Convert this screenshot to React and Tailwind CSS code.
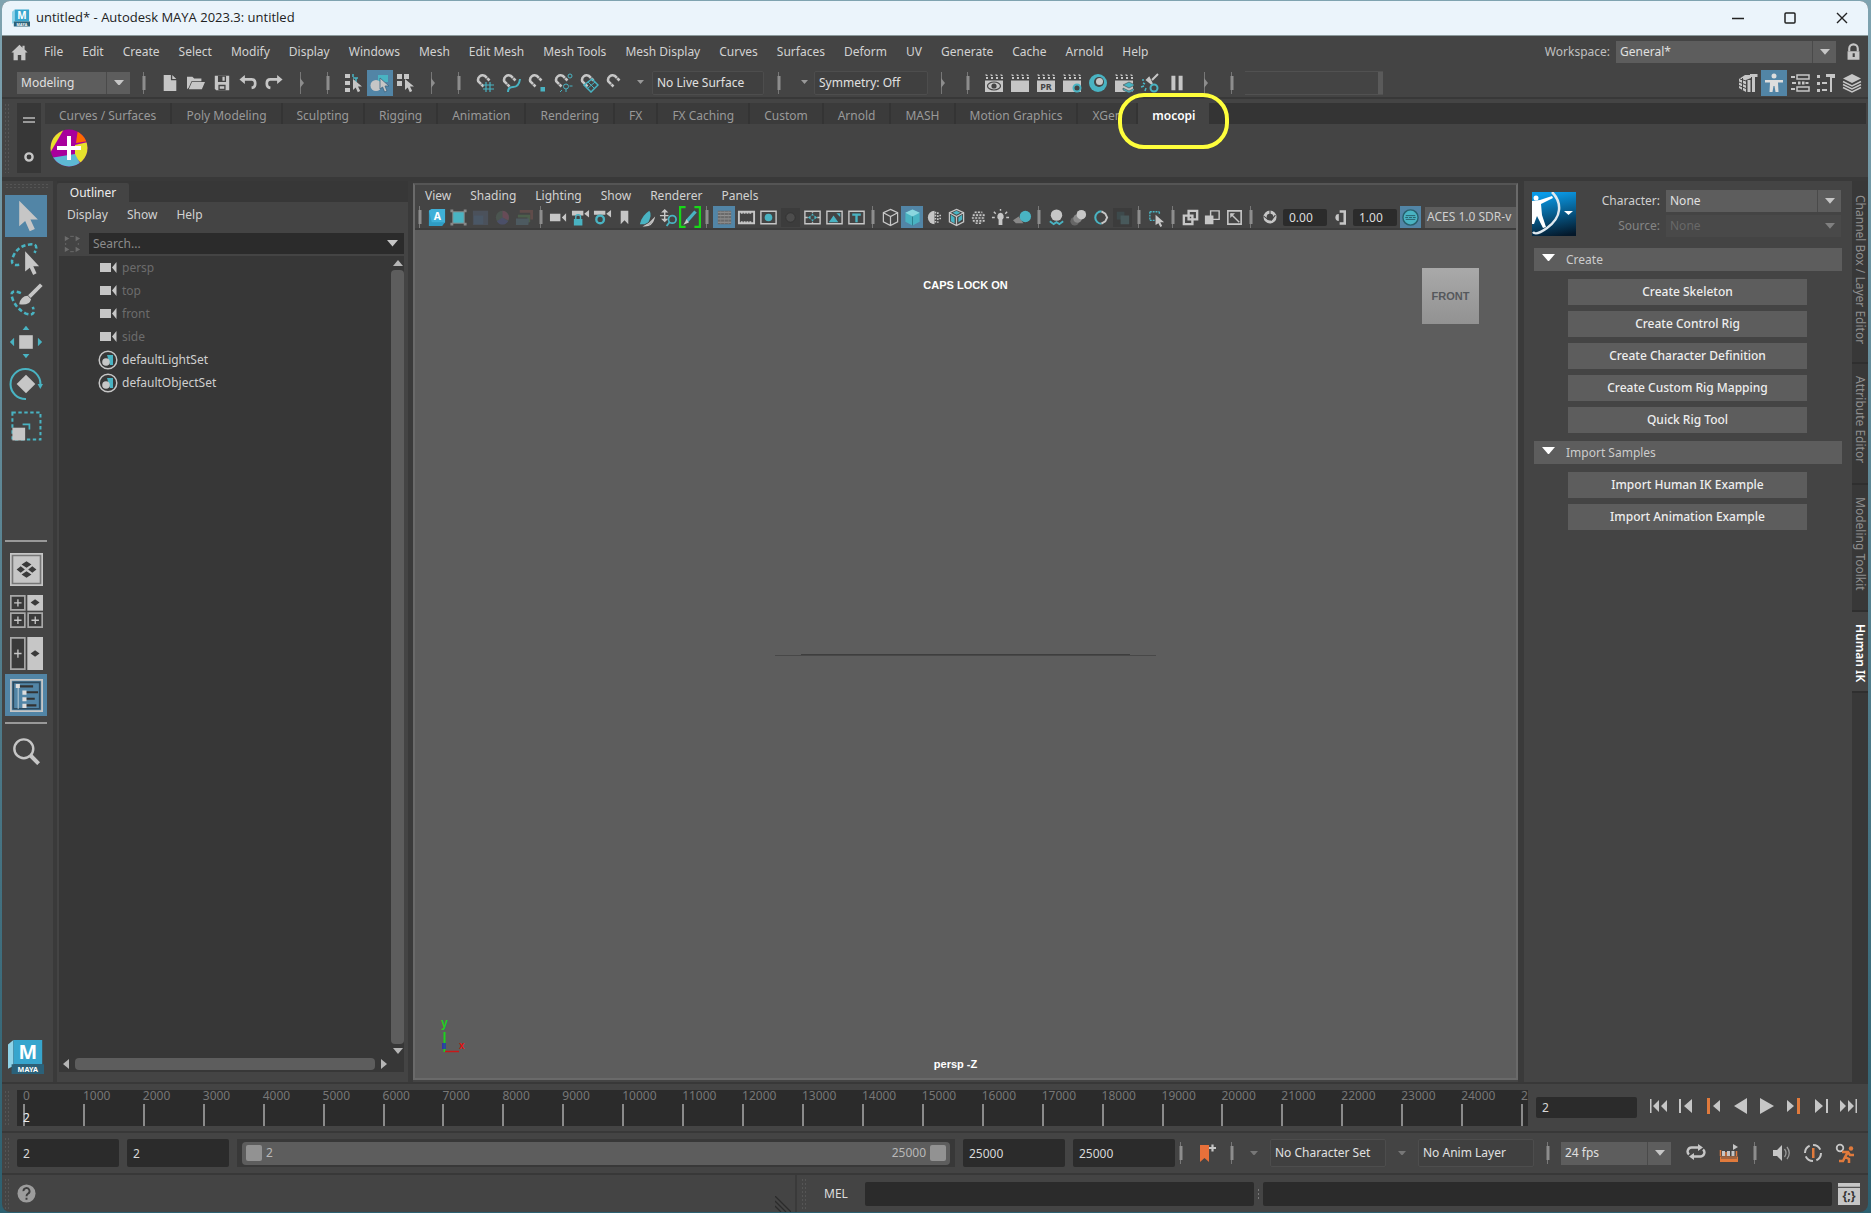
import React, { useState } from 'react';

const G = '#c6c6c6';
const T = '#49b3c2';
const O = '#e07a3c';

const magnet = (
  <>
    <path d="M8.500 13.500 3.300 8.300A4.600 4.600 0 0 1 9.800 2.800L14.500 7.500" fill="none" stroke={G} strokeWidth="2.600" />
    <path d="M5 12.500 7.800 9.700M10.500 6.800 13.300 4" stroke="#444" strokeWidth="0.800" />
  </>
);
const clapper = (
  <>
    <path d="M1 1.500h2l1 1.500H2zM6 1.500h2l1 1.500H7zM11 1.500h2l1 1.500h-2zM16 1.500h2l1 1.500h-2zM2 4h2v2H2zM7 4h2v2H7zM12 4h2v2h-2zM17 4h2v2h-2z" fill={G} />
    <path d="M1 7.500h18v11.500H1z" fill={G} />
  </>
);
const cursor = <path d="M9 6l9 7.500h-4l2.200 4.500-2.400 1.200-2.100-4.700L9 17z" fill={G} />;
const camera = <path d="M1 6h11v8H1zM13.500 10 18 5.500v9z" fill={G} />;
const cube = <path d="M10 1.500 17.500 5v9.500L10 18.500 2.500 14.500V5zM2.500 5 10 9l7.500-4M10 9v9.500" fill="none" stroke={G} strokeWidth="1.300" />;

const ICONS = {
  home: <path d="M10 1 0.500 10H3v9h5v-6h4v6h5v-9h2.500L16 6.500V2h-2.500v2.300z" fill={G} />,
  newFile: <path d="M3 1h8v6h6v12H3zM12.500 1 17 5.500h-4.500z" fill={G} />,
  open: <path d="M0 3h6l2 2h8v3H5l-3 7-2 2zM5.500 9H20l-3.500 8H2z" fill={G} />,
  save: (
    <>
      <path d="M2 2h16v16H3.500L2 16.500z" fill={G} />
      <path d="M5.500 2h9v7h-9zM6 12h8v6H6z" fill="#444" />
      <path d="M10.500 3h2.500v4.500h-2.500zM7.500 13.500h5v3h-5z" fill={G} />
    </>
  ),
  undo: (
    <>
      <path d="M5 6h9q4 0 4 4.500T14 15.500" fill="none" stroke={G} strokeWidth="3" />
      <path d="M6.500 1v10L0.500 6z" fill={G} />
    </>
  ),
  redo: (
    <>
      <path d="M15 6H6q-4 0-4 4.500T6 15.500" fill="none" stroke={G} strokeWidth="3" />
      <path d="M13.500 1v10l6-5z" fill={G} />
    </>
  ),
  selHier: (
    <>
      <path d="M1 1h5v4H1zM1 8h5v4H1zM1 15h5v4H1z" fill={G} />
      <path d="M9 1v3M9 5h5M12 5v4" stroke={T} strokeWidth="1.500" fill="none" />
      {cursor}
    </>
  ),
  selObj: (
    <>
      <path d="M8 2h10v7H8z" fill={T} />
      <circle cx="6" cy="12.500" r="5.500" fill={G} />
      <path d="M10 5l9 8h-4l2 5-2.400 1-2-5-2.600 2z" fill={G} stroke="#3d6580" strokeWidth="0.800" />
    </>
  ),
  selComp: (
    <>
      <path d="M1 1h5v5H1zM8 1h5v5H8zM1 8h5v5H1z" fill={G} />
      {cursor}
    </>
  ),
  magGrid: (
    <>
      {magnet}
      <path d="M8 12h11M8 16h11M11 9v10M15 9v10" stroke={T} strokeWidth="1.200" />
    </>
  ),
  magCurve: (
    <>
      {magnet}
      <path d="M7 19q0-5 5-5 6 0 7-8" fill="none" stroke={T} strokeWidth="2" />
    </>
  ),
  magPoint: (
    <>
      {magnet}
      <path d="M13.500 14h4.500v4.500h-4.500z" fill={T} />
    </>
  ),
  magProj: (
    <>
      {magnet}
      <circle cx="17" cy="3" r="2" fill="none" stroke={T} />
      <circle cx="13" cy="13.500" r="2.500" fill="none" stroke={T} />
      <path d="M13 16v3M16.500 13h3M9 17l-2 2" stroke={T} />
    </>
  ),
  magPlane: (
    <>
      {magnet}
      <path d="M5 12 13 6l6 6-7 7z" fill="none" stroke={T} strokeWidth="1.500" />
      <path d="M9 9l6 6M8.500 15.500 16 9" stroke={T} />
    </>
  ),
  mag: magnet,
  renderView: (
    <>
      {clapper}
      <ellipse cx="10" cy="13" rx="6.500" ry="4" fill="none" stroke="#444" strokeWidth="1.200" />
      <circle cx="10" cy="13" r="2.600" fill="#444" />
    </>
  ),
  render: clapper,
  ipr: (
    <>
      {clapper}
      <text x="10" y="17" fontSize="9" fontWeight="700" textAnchor="middle" fill="#444">PR</text>
    </>
  ),
  renderSet: (
    <>
      {clapper}
      <circle cx="15" cy="15" r="3.500" fill="#444" stroke={T} strokeWidth="2" />
    </>
  ),
  hyper: (
    <>
      <circle cx="10" cy="10" r="9" fill={T} />
      <circle cx="11" cy="9" r="5" fill="#444" />
      <circle cx="11.500" cy="8.500" r="3.500" fill={G} />
    </>
  ),
  renderLayer: (
    <>
      {clapper}
      <path d="M9 12l6-3 6 3-6 3zM9 15l6 3 6-3v2l-6 3-6-3z" fill={T} stroke="#444" strokeWidth="0.600" />
    </>
  ),
  lightEd: (
    <>
      <path d="M18 1 12 7M7 7l5 4-3-6z" stroke={G} strokeWidth="2" fill={G} />
      <path d="M2 7h2M1 14l3-1M5 18l1-3M3 10l2 1" stroke={T} strokeWidth="1.500" />
      <circle cx="14" cy="15" r="3.500" fill="none" stroke={T} strokeWidth="2" />
    </>
  ),
  pause: <path d="M3 1h5v18H3zM12 1h5v18h-5z" fill={G} />,
  modelKit: (
    <>
      <path d="M1 6 7 2h6v3L8 7v12l-7-4z" fill={G} />
      <path d="M1 9l7 3M1 12.500l7 3M4.500 5v12M2 6l6 2" stroke="#444" />
      <path d="M9.500 7h3v12h-3zM12 1h7.500v3H17v15h-3V4h-2z" fill={G} />
    </>
  ),
  human: (
    <>
      <circle cx="10" cy="3" r="2.500" fill="#ddd" />
      <path d="M1 7h18v2.500h-5L14.500 19h-3l-1-6h-1l-1 6h-3L6 9.500H1z" fill="#ddd" />
    </>
  ),
  attrs: (
    <>
      <path d="M7 2h12v4H7zM7 14h12v4H7z" fill="none" stroke={G} strokeWidth="1.500" />
      <path d="M1 4h4M2 10h4M1 16h4M15.500 10h3" stroke={G} strokeWidth="2" />
      <path d="M8 8.500h2.500v3H8zM12 8.500h2.500v3H12z" fill={G} />
    </>
  ),
  toolSet: (
    <>
      <path d="M1 2h3v3H1zM1 9h3v3H1zM1 16h3v3H1zM10 1h9v4h-3v14h-2V4h-4z" fill={G} />
      <path d="M6 10h5M6 17h5" stroke={G} strokeWidth="2" />
    </>
  ),
  layers: (
    <>
      <path d="M10 1l9 4.500-9 4.500-9-4.500z" fill={G} />
      <path d="M1 8.500 10 13l9-4.500M1 11.500 10 16l9-4.500M1 14.500 10 19l9-4.500" fill="none" stroke={G} strokeWidth="1.500" />
    </>
  ),
  lock: (
    <>
      <path d="M5 9V6a5 5 0 0 1 10 0v3" fill="none" stroke={G} strokeWidth="2.500" />
      <path d="M3 9h14v10H3z" fill={G} />
      <path d="M9 11.500h2.500V16H9z" fill="#444" />
    </>
  ),
  // panel toolbar
  aces: (
    <>
      <path d="M2 3 5 1h14v14l-3 4H2z" fill="#2f9cc4" />
      <path d="M2 3 5 1h14v14H5z" fill="#3fb0d8" />
      <text x="11" y="13" fontSize="11" fontWeight="700" textAnchor="middle" fill="#fff">A</text>
    </>
  ),
  frameAll: (
    <>
      <path d="M4 4h12v12H4z" fill={T} stroke="#888" />
      <path d="M1.500 1.500h3v3h-3zM15.500 1.500h3v3h-3zM1.500 15.500h3v3h-3zM15.500 15.500h3v3h-3z" fill="#888" />
    </>
  ),
  dimSquare: (
    <>
      <path d="M2 3h16v15H2z" fill="#4b515b" />
      <path d="M3 8h10v9H3z" fill="#4a5766" />
    </>
  ),
  dimWheel: (
    <>
      <circle cx="10" cy="10" r="7" fill="#4b5550" />
      <path d="M10 10V3a7 7 0 0 1 6 10z" fill="#674b57" />
      <path d="M10 10 4 14a7 7 0 0 0 12 0z" fill="#4b4f68" />
    </>
  ),
  dimStack: (
    <>
      <path d="M5 2h14v10h-3V5H5z" fill="#604c4a" />
      <path d="M3 7h13v8h-3v-5H3z" fill="#4c5f4c" />
      <path d="M1 11h14l-1 7H1z" fill="#4d5a60" />
    </>
  ),
  cam: camera,
  camLock: (
    <>
      <path d="M1 3h12v5H1zM14 6l5-4v8z" fill={G} />
      <path d="M3 9h9v10H3z" fill="#444" />
      <path d="M5 12V9.500a2.500 2.500 0 0 1 5 0V12" fill="none" stroke={T} strokeWidth="1.500" />
      <path d="M3 11.500h9v7H3z" fill={T} />
    </>
  ),
  camGear: (
    <>
      <path d="M1 3h12v4H1zM14 6l5-4v8z" fill={G} />
      <circle cx="7.500" cy="12" r="4" fill="#444" stroke={T} strokeWidth="2.500" />
    </>
  ),
  bookmark: <path d="M6 3h8v14l-4-4-4 4z" fill={G} />,
  plane: (
    <>
      <path d="M3 17Q5 8 13 3q3 4-1 12l-4 2z" fill={T} />
      <path d="M8 19q8 0 10-8l-5 5z" stroke={G} strokeWidth="1.200" fill="#888" />
    </>
  ),
  panZoom: (
    <>
      <path d="M1 8h9M6 3v10M6 2l-2 2h4zM6 14l-2-2h4z" stroke={G} strokeWidth="1.500" fill={G} />
      <circle cx="14" cy="12" r="4" fill="#444" stroke={T} strokeWidth="1.800" />
      <path d="M11 15l-3 4" stroke={T} strokeWidth="2" />
    </>
  ),
  pencil: (
    <>
      <path d="M6 1H1v18h5M14 1h5v18h-5" stroke="#18d818" strokeWidth="2" fill="none" />
      <path d="M15 5 7 14" stroke={T} strokeWidth="3" />
      <path d="M7 12 4 17l5-2z" fill={G} />
    </>
  ),
  grid: (
    <>
      <path d="M3 3h14v14H3z" fill="#6a6a6a" />
      <path d="M3 4.500h14M3 8h14M3 11.500h14M3 15h14" stroke="#999" />
      <path d="M6 3v14M10 3v14M14 3v14" stroke="#888" strokeWidth="0.600" />
    </>
  ),
  film: (
    <>
      <path d="M2 4h16v12H2z" fill="none" stroke={G} strokeWidth="2" />
      <path d="M4 5h12M4 15h12" stroke={G} strokeWidth="2" strokeDasharray="2 1" />
    </>
  ),
  gateDot: (
    <>
      <path d="M2 3.500h16v13H2z" fill="none" stroke={G} strokeWidth="1.500" />
      <circle cx="10" cy="10" r="4" fill={T} />
    </>
  ),
  gateDim: (
    <>
      <path d="M0 0h20v20H0z" fill="#3c3c3c" />
      <circle cx="10" cy="10" r="5" fill="#4d4d4d" stroke="#333" />
    </>
  ),
  gateMove: (
    <>
      <path d="M2 3.500h16v13H2zM2 10h3M15 10h3M10 3v2M10 15v2" fill="none" stroke={G} strokeWidth="1.500" />
      <path d="M5 10l3-2v4zM15 10l-3-2v4zM10 5.500 8.500 8h3zM10 14.500 8.500 12h3z" fill={T} />
    </>
  ),
  gateImg: (
    <>
      <path d="M2 3.500h16v13H2z" fill="none" stroke={G} strokeWidth="1.500" />
      <path d="M4 15l5-7 5 7zM12 5.500h4v4z" fill={T} />
    </>
  ),
  gateText: (
    <>
      <path d="M2 3.500h16v13H2z" fill="none" stroke={G} strokeWidth="1.500" />
      <path d="M5.500 7h9M10 7v8" stroke={T} strokeWidth="2.500" />
    </>
  ),
  cube,
  cubeOn: (
    <>
      <path d="M10 1.500 17.500 5v9.500L10 18.500 2.500 14.500V5z" fill={T} />
      <path d="M2.500 5 10 9l7.500-4L10 1.500z" fill="#8bd6df" />
      <path d="M10 9v9.500" stroke="#2c7f8c" />
    </>
  ),
  shade: (
    <>
      <path d="M10 3a7 7 0 0 0 0 14z" fill={G} />
      <path d="M11 4v12M13.500 4.500v11M16 7v6" stroke={G} strokeWidth="1.700" strokeDasharray="1.700 1.500" />
    </>
  ),
  cubeTex: (
    <>
      <path d="M4 7l4 3v6l-4-2zM12 10l4-3v5l-4 3zM10 3l4 2-4 2-4-2z" fill={T} />
      {cube}
    </>
  ),
  checker: (
    <>
      <circle cx="10" cy="10" r="7" fill="#555" />
      <path d="M6 4.500h8M4 7.500h13M3 10.500h14M4 13.500h13M7 16h7" stroke={G} strokeWidth="1.700" strokeDasharray="2 1.500" />
    </>
  ),
  light: (
    <>
      <path d="M10 5a4 4 0 0 1 2 7v6H8v-6a4 4 0 0 1 2-7z" fill={G} />
      <path d="M10 1v2M3 4l2 2M17 4l-2 2M1 10h3M16 10h3" stroke={G} strokeWidth="1.500" />
    </>
  ),
  shadow: (
    <>
      <path d="M0 13 6 9l5 7H3z" fill="#888" />
      <circle cx="13" cy="9" r="6" fill={T} />
    </>
  ),
  ao: (
    <>
      <circle cx="10" cy="7.500" r="6" fill={G} />
      <path d="M3 14l4 3 3-2 3 2 4-3" fill="none" stroke={T} strokeWidth="2" />
    </>
  ),
  motion: (
    <>
      <circle cx="6" cy="14" r="4.500" fill="#666" />
      <circle cx="9" cy="11" r="4.500" fill="#8a8a8a" />
      <circle cx="13" cy="7" r="5" fill={G} />
    </>
  ),
  aa: (
    <>
      <path d="M11 3.500a6.500 6.500 0 0 0 0 13" fill="none" stroke={T} strokeWidth="2.200" />
      <path d="M11 3.500l4 2.500 2 4-2 4-4 2.500" fill="none" stroke={G} strokeWidth="2" />
    </>
  ),
  dof: (
    <>
      <path d="M0 0h20v20H0z" fill="#3c3c3c" />
      <path d="M4 4h8v8H4z" fill="#3d4a4c" />
      <path d="M8 8h9v9H8z" fill="#48595b" />
    </>
  ),
  isolate: (
    <>
      <path d="M3 4h10M3 4v9M3 13h5M13 4v3" stroke={T} strokeWidth="1.500" strokeDasharray="2 1" fill="none" />
      <path d="M9 7l9 8h-4l2 4-2 1-2-4-3 2z" fill={G} />
    </>
  ),
  xrayA: (
    <>
      <path d="M8 3h9v9H8z" fill="none" stroke={G} strokeWidth="2.500" />
      <path d="M3 8h9v9H3z" fill="none" stroke={G} strokeWidth="2.500" />
    </>
  ),
  xrayB: (
    <>
      <path d="M8 3h9v9H8z" fill="none" stroke={G} strokeWidth="1.500" />
      <path d="M2 8h9v9H2z" fill={G} />
    </>
  ),
  xrayC: (
    <>
      <path d="M3 3h14v14H3z" fill="none" stroke={G} strokeWidth="1.700" />
      <path d="M6 6l9 9" stroke={G} strokeWidth="1.500" />
      <path d="M5.500 5.500h5l-5 5z" fill={G} />
    </>
  ),
  exposure: (
    <>
      <circle cx="10" cy="10" r="5.500" fill="none" stroke={G} strokeWidth="3.500" />
      <path d="M10 2v5M3 9l5 4M16 8l-5 6" stroke="#444" strokeWidth="1.200" />
    </>
  ),
  gamma: (
    <>
      <path d="M9 3h6v14H9" fill="none" stroke={G} strokeWidth="3" />
      <path d="M8 6a4 4 0 0 0 0 8z" fill={G} />
    </>
  ),
  cms: (
    <>
      <circle cx="10" cy="10" r="8" fill={T} stroke="#28606c" strokeWidth="1.500" />
      <path d="M4.500 10h3M8.500 10h3M12.500 10h3M5 12h10M5 8h10" stroke="#28606c" />
    </>
  ),
  // playback
  toStart: <path d="M1 3h1.500v14H1zM10 4v12l-6-6zM18 4v12l-6-6z" fill={G} />,
  stepBack: <path d="M3 3h2v14H3zM16 3v14l-8-7z" fill={G} />,
  keyBack: (
    <>
      <path d="M4 2h3v16H4z" fill={O} />
      <path d="M17 4v12l-7-6z" fill={G} />
    </>
  ),
  playBack: <path d="M17 2v16L4 10z" fill={G} />,
  play: <path d="M3 2v16l14-8z" fill={G} />,
  keyFwd: (
    <>
      <path d="M13 2h3v16h-3z" fill={O} />
      <path d="M3 4v12l7-6z" fill={G} />
    </>
  ),
  stepFwd: <path d="M15 3h2v14h-2zM4 3v14l8-7z" fill={G} />,
  toEnd: <path d="M17.500 3H19v14h-1.500zM2 4v12l6-6zM10 4v12l6-6z" fill={G} />,
  bookAdd: (
    <>
      <path d="M3 2h9v17l-4.500-4L3 19z" fill="#e8703a" />
      <path d="M12 5h7M15.500 1.500v7" stroke={G} strokeWidth="2.200" />
    </>
  ),
  loop: (
    <>
      <path d="M14 4.500H6a4 4 0 0 0-3 7M6 13.500h8a4 4 0 0 0 3-7" fill="none" stroke={G} strokeWidth="2.400" />
      <path d="M12 1l5 3.500L12 8zM8 10l-5 3.500L8 17z" fill={G} />
    </>
  ),
  cached: (
    <>
      <path d="M1 13.500h18V19H1z" fill={O} />
      <path d="M2 15h16" stroke="#444" strokeWidth="0.800" />
      <path d="M3 8h3v5H3zM8 8h3v5H8zM12.500 8h3v5h-3z" fill={G} />
      <path d="M14 1l5 3-5 3z" fill={G} />
      <path d="M1.500 7v6M7 9v4M17.500 8v5" stroke={O} strokeWidth="1.500" />
    </>
  ),
  speaker: (
    <>
      <path d="M2 7h4l5-5v16l-5-5H2z" fill={G} />
      <path d="M13.500 6q3 4 0 8M16 4q4.500 6 0 12" fill="none" stroke="#999" strokeWidth="1.300" />
    </>
  ),
  autoKey: (
    <>
      <circle cx="10" cy="10" r="8" fill="none" stroke={G} strokeWidth="2" strokeDasharray="9 3.500" />
      <path d="M9 5h2.500v10H9z" fill={O} />
    </>
  ),
  runner: (
    <>
      <circle cx="5" cy="5" r="3.300" fill="none" stroke={G} strokeWidth="1.800" />
      <circle cx="16" cy="5.500" r="2.200" fill={O} />
      <path d="M7 9h6l2 3h4M13 9l-3 5 4 2v4M10 14l-2 4H4" fill="none" stroke={O} strokeWidth="2.500" />
    </>
  ),
  // tool box
  arrowTool: <path d="M6 1v15l3.500-3 2.700 6 3-1.300-2.600-5.700H17z" fill={G} />,
  lasso: (
    <>
      <path d="M6 14Q0 15 2.500 9T12 2q6-1 3 5" fill="none" stroke={T} strokeWidth="1.500" strokeDasharray="2.500 1.500" />
      <path d="M9.500 6v12l2.700-2.300 2 4.300 2-1-1.900-4.200h3.400z" fill={G} />
    </>
  ),
  paintSel: (
    <>
      <path d="M7 6Q0 3 2 9t8 9q6 2 4-4" fill="none" stroke={T} strokeWidth="1.500" strokeDasharray="2.500 1.500" />
      <path d="M19 1 12 8" stroke={G} strokeWidth="2.200" />
      <path d="M6 12.500q1-5 5-5l2 2q-1 4-7 3z" fill={G} />
    </>
  ),
  move: (
    <>
      <path d="M6 6h8v8H6z" fill={G} />
      <path d="M10 0.500 12 3H8zM10 19.500 12 17H8zM0.500 10 3 7.500v5zM19.500 10 17 7.500v5z" fill={T} />
    </>
  ),
  rotate: (
    <>
      <path d="M10 4.500 15.500 10 10 15.500 4.500 10z" fill={G} />
      <path d="M18.500 10A8.800 8.800 0 1 0 10 18.800" fill="none" stroke={T} strokeWidth="1.200" />
      <path d="M16.800 10h3.200l-1.600 3z" fill={T} />
    </>
  ),
  scale: (
    <>
      <path d="M2 2h16.500v16H2z" fill="none" stroke={T} strokeWidth="1.200" strokeDasharray="2 1.500" />
      <path d="M2 11h7.500v7.500H2z" fill={G} />
      <path d="M8 9h4v3" stroke={T} fill="none" />
    </>
  ),
  single: (
    <>
      <path d="M0 0h20v20H0z" fill={G} />
      <path d="M1.500 1.500h17v17h-17z" fill="none" stroke="#777" />
      <path d="M10 5l3 2-3 2-3-2zM10 11l3 2-3 2-3-2zM6.500 8l2.500 2-2.500 2L4 10zM13.500 8l2.500 2-2.500 2-2.500-2z" fill="#3a3a3a" />
    </>
  ),
  quad: (
    <>
      <path d="M0.500 0.500h8.500v8.500H0.500zM0.500 11h8.500v8.500H0.500zM11 11h8.500v8.500H11z" fill="#3a3a3a" stroke="#a8a8a8" />
      <path d="M10.500 0H20v9.500h-9.500z" fill={G} />
      <path d="M2.500 4.800h4.500M4.800 2.500v4.500M2.500 15.300h4.500M4.800 13v4.500M13 15.300h4.500M15.300 13v4.500" stroke={G} strokeWidth="0.800" />
      <path d="M12.500 4.500l2.700-2 2.700 2-2.700 2z" fill="#3a3a3a" />
    </>
  ),
  duo: (
    <>
      <path d="M0.500 0.500h8.500v19H0.500z" fill="#3a3a3a" stroke="#a8a8a8" />
      <path d="M10.500 0H20v20h-9.500z" fill={G} />
      <path d="M2.500 10h4.500M4.800 7.500v5" stroke={G} strokeWidth="0.800" />
      <path d="M12.500 10l2.700-2 2.700 2-2.700 2z" fill="#3a3a3a" />
    </>
  ),
  outliner: (
    <>
      <path d="M0.500 0.500h19v19h-19z" fill="none" stroke={G} strokeWidth="1.200" />
      <path d="M2 2h16v16H2z" fill="none" stroke="#2d4a5e" />
      <path d="M5 4v14" stroke="#9fbccc" strokeWidth="0.800" />
      <path d="M5 4.500h9M9 8h8M9 12h6M9 16h7" stroke="#333" strokeWidth="1.300" />
      <path d="M3.500 3h2.500v2.500H3.500zM7.500 7H10v2.500H7.500zM7.500 11H10v2.500H7.500zM7.500 15H10v2.500H7.500z" fill="#ddd" />
    </>
  ),
  search: (
    <>
      <circle cx="8" cy="8" r="7" fill="none" stroke={G} strokeWidth="1.800" />
      <path d="M13 13 19 19" stroke={G} strokeWidth="3" />
    </>
  ),
  mayaLogo: (
    <>
      <path d="M0 3 3 0.500V15l-3 1.500z" fill="#8fd3e8" />
      <path d="M3 0.500h16V14H3z" fill="#37a5cd" />
      <path d="M2 14h18v5.500H2z" fill="#2b6179" />
      <text x="11" y="11" fontSize="11" fontWeight="700" textAnchor="middle" fill="#fff">M</text>
      <text x="11" y="18.500" fontSize="4" fontWeight="700" textAnchor="middle" fill="#fff">MAYA</text>
    </>
  ),
  setIcon: (
    <>
      <circle cx="10" cy="10" r="8.800" fill="none" stroke={G} strokeWidth="1.500" />
      <path d="M9 5h6v10h-3z" fill={T} />
      <circle cx="8" cy="12" r="3.800" fill={G} />
    </>
  ),
  filter: (
    <>
      <path d="M2 1v6l5-3zM14 1v6l5-3zM2 13v6l5-3zM14 13v6l5-3z" fill="#6c6c6c" />
      <path d="M8 1.500h4M8 18.500h4M3 9v2M17 9v2" stroke="#6c6c6c" />
    </>
  ),
  help: (
    <>
      <circle cx="10" cy="10" r="9.500" fill="#9c9c9c" />
      <path d="M6.800 7.500a3.200 3.200 0 1 1 4.800 2.700Q10 11 10 13" fill="none" stroke="#3d3d3d" strokeWidth="2" />
      <path d="M9 14.500h2v2H9z" fill="#3d3d3d" />
    </>
  ),
  script: (
    <>
      <path d="M0 0h20v20H0z" fill={G} />
      <path d="M0 4h20" stroke="#555" />
      <text x="10" y="15.500" fontSize="11" fontWeight="700" textAnchor="middle" fill="#333">{'{;}'}</text>
    </>
  ),
  gearSmall: <circle cx="10" cy="10" r="6" fill="none" stroke={G} strokeWidth="4" />,
};

function Icon({ name, className = 'size-5' }) {
  return (
    <svg viewBox="0 0 20 20" className={`shrink-0 ${className}`} aria-hidden="true">
      {ICONS[name]}
    </svg>
  );
}

function IconButton({ name, cell = 'h-[26px] w-[26px]', icon = 'size-5', active = false }) {
  return (
    <button type="button" aria-label={name} className={`flex shrink-0 items-center justify-center ${cell} ${active ? 'bg-[#5285a6]' : ''}`}>
      <Icon name={name} className={icon} />
    </button>
  );
}

function Sep({ arrow = false, className = 'w-[27px]' }) {
  return (
    <div className={`flex shrink-0 justify-center ${className}`}>
      <svg viewBox="0 0 6 26" className="h-[26px] w-1.5" aria-hidden="true">
        <path d="M2.500 2v22" stroke="#777" />
        <path d={arrow ? 'M2 8l4 5-4 5z' : 'M1.500 6h3v14h-3z'} fill="#8d8d8d" />
      </svg>
    </div>
  );
}

function Caret({ className = 'w-[11px] text-[#c6c6c6]' }) {
  return (
    <svg viewBox="0 0 12 7" className={`shrink-0 ${className}`} aria-hidden="true">
      <path d="M0 0h12L6 7z" fill="currentColor" />
    </svg>
  );
}

function Dropdown({ id, label, value, className, disabled = false }) {
  return (
    <div className={`relative ${disabled ? 'bg-[#494949] text-[#686868]' : 'bg-[#5d5d5d] text-[#e0e0e0]'} ${className}`}>
      <select id={id} aria-label={label} disabled={disabled} className="h-full w-full appearance-none bg-transparent pl-1 outline-none">
        <option>{value}</option>
      </select>
      <span className={`pointer-events-none absolute inset-y-0 right-0 flex w-6 items-center justify-center border-l ${disabled ? 'border-[#494949]' : 'border-[#4a4a4a]'}`}>
        <Caret className={disabled ? 'w-[10px] text-[#808080]' : 'w-[10px] text-[#c6c6c6]'} />
      </span>
    </div>
  );
}

function Grip({ className = 'my-1' }) {
  return <div className={`w-[7px] shrink-0 bg-[radial-gradient(#555_1px,transparent_1px)] bg-[size:3px_4px] ${className}`} />;
}

function MenuItems({ items, className }) {
  return (
    <nav className={`flex items-center ${className}`}>
      {items.map((m) => (
        <button type="button" key={m} className="whitespace-nowrap">{m}</button>
      ))}
    </nav>
  );
}

const MENUS = ['File', 'Edit', 'Create', 'Select', 'Modify', 'Display', 'Windows', 'Mesh', 'Edit Mesh', 'Mesh Tools', 'Mesh Display', 'Curves', 'Surfaces', 'Deform', 'UV', 'Generate', 'Cache', 'Arnold', 'Help'];
const SHELVES = ['Curves / Surfaces', 'Poly Modeling', 'Sculpting', 'Rigging', 'Animation', 'Rendering', 'FX', 'FX Caching', 'Custom', 'Arnold', 'MASH', 'Motion Graphics', 'XGen', 'mocopi'];

function TitleBar() {
  return (
    <header className="flex h-[35px] shrink-0 items-center border-b border-[#8c9a9c] bg-[#ebf4fb] pl-2.5 font-['Open_Sans',sans-serif] text-[13px] text-[#222]">
      <Icon name="mayaLogo" className="size-[18px]" />
      <h1 className="ml-1.5 grow">untitled* - Autodesk MAYA 2023.3: untitled</h1>
      <button type="button" aria-label="Minimize" className="flex w-[52px] justify-center">
        <svg viewBox="0 0 12 12" className="size-3"><path d="M0 6.500h12" stroke="#222" strokeWidth="1.500" /></svg>
      </button>
      <button type="button" aria-label="Maximize" className="flex w-[52px] justify-center">
        <svg viewBox="0 0 12 12" className="size-3"><rect x="1" y="1" width="10" height="10" rx="1" fill="none" stroke="#222" strokeWidth="1.500" /></svg>
      </button>
      <button type="button" aria-label="Close" className="flex w-[52px] justify-center">
        <svg viewBox="0 0 12 12" className="size-3"><path d="M1 1l10 10M11 1 1 11" stroke="#222" strokeWidth="1.400" /></svg>
      </button>
    </header>
  );
}

function MenuBar() {
  return (
    <div className="flex h-8 shrink-0 items-center pr-1.5 pl-[9px]">
      <Icon name="home" className="size-[17px]" />
      <MenuItems items={MENUS} className="ml-4 grow gap-[19px] text-[#d2d2d2]" />
      <label htmlFor="workspace" className="mr-1.5 text-[#c0c0c0]">Workspace:</label>
      <Dropdown id="workspace" value="General*" className="mr-[9px] h-[22px] w-[220px]" />
      <Icon name="lock" className="h-5 w-[17px]" />
    </div>
  );
}

function StatusLine() {
  return (
    <div className="flex h-[31px] shrink-0 items-center border-b-2 border-[#383838] pr-[3px] pl-0.5">
      <Grip />
      <Dropdown label="Menu set" value="Modeling" className="ml-1.5 h-[22px] w-[113px]" />
      <Sep />
      {['newFile', 'open', 'save', 'undo', 'redo'].map((n) => <IconButton key={n} name={n} icon="size-[18px]" />)}
      <Sep arrow />
      <Sep />
      {['selHier', 'selObj', 'selComp'].map((n) => <IconButton key={n} name={n} active={n === 'selObj'} />)}
      <Sep arrow className="w-[26px]" />
      <Sep />
      {['magGrid', 'magCurve', 'magPoint', 'magProj', 'magPlane', 'mag'].map((n) => <IconButton key={n} name={n} />)}
      <button type="button" aria-label="Live surface menu" className="flex w-6 justify-center"><Caret className="w-[7px] text-[#999]" /></button>
      <button type="button" className="h-6 w-28 rounded-xs border border-[#4d4d4d] bg-[#404040] px-1 text-left whitespace-nowrap text-[#e0e0e0]">No Live Surface</button>
      <Sep className="w-[30px]" />
      <button type="button" aria-label="Symmetry menu" className="flex w-5 justify-center"><Caret className="w-[7px] text-[#999]" /></button>
      <button type="button" className="h-6 w-[114px] rounded-xs border border-[#4d4d4d] bg-[#404040] px-1 text-left text-[#e0e0e0]">Symmetry: Off</button>
      <Sep arrow />
      <Sep className="w-[26px]" />
      {['renderView', 'render', 'ipr', 'renderSet', 'hyper', 'renderLayer', 'lightEd'].map((n) => <IconButton key={n} name={n} />)}
      <IconButton name="pause" cell="h-[26px] w-7" icon="size-4" />
      <Sep arrow />
      <Sep />
      <div className="flex h-6 w-[138px] border-y border-[#515151]">
        <input aria-label="Quick select" className="min-w-0 grow bg-transparent outline-none" />
        <span className="w-1.5 bg-[#5a5a5a]" />
      </div>
      <div className="ml-auto flex">
        {['modelKit', 'human', 'attrs', 'toolSet', 'layers'].map((n) => <IconButton key={n} name={n} active={n === 'human'} />)}
      </div>
    </div>
  );
}

function Shelf() {
  const [tab, setTab] = useState('mocopi');
  return (
    <div className="flex h-[82px] shrink-0 border-b-4 border-[#393939] pt-1 pr-0.5 pb-1 pl-0.5">
      <Grip className="my-0" />
      <div className="ml-1.5 flex w-6 flex-col items-center bg-[#373737] pt-[14px]">
        <button type="button" aria-label="Shelf menu" className="h-[6px] w-3 border-y-2 border-[#999]" />
        <button type="button" aria-label="Shelf options" className="mt-7"><Icon name="gearSmall" className="size-3" /></button>
      </div>
      <div className="ml-1 grow">
        <div className="flex h-[21px] gap-0.5 bg-[#343434]">
          {SHELVES.map((s) => (
            <div key={s} className="relative flex">
              <button
                type="button"
                onClick={() => setTab(s)}
                className={`px-[14px] pt-1 leading-4 whitespace-nowrap ${tab === s ? 'bg-[#444] font-semibold text-white' : 'bg-[#3b3b3b] text-[#999]'}`}
              >
                {s}
              </button>
              {s === 'mocopi' && (
                <span className="pointer-events-none absolute -inset-x-5 -top-2.5 h-14 rounded-[26px] border-4 border-[#ffff3c]" />
              )}
            </div>
          ))}
        </div>
        <button type="button" aria-label="mocopi receiver" className="mt-[5px] ml-[5px] block">
          <svg viewBox="0 0 38 38" className="size-[38px]">
            <defs><clipPath id="disc"><circle cx="19" cy="19" r="18.500" /></clipPath></defs>
            <g clipPath="url(#disc)">
              <path d="M0 0h38v38H0z" fill="#a8009c" />
              <path d="M0 0h14L0 24z" fill="#e6e22c" />
              <path d="M28 0 26 14l12-2V0z" fill="#ff6a00" />
              <path d="M38 13 25 16v12l8 8 5-6z" fill="#e6e22c" />
              <path d="M0 29 25 25l7 13H0z" fill="#5db9d4" />
            </g>
            <path d="M19 7v24M7 19h24" stroke="#fff" strokeWidth="4" />
          </svg>
        </button>
      </div>
    </div>
  );
}

function ToolBox() {
  const tools = ['arrowTool', 'lasso', 'paintSel', 'move', 'rotate', 'scale'];
  return (
    <aside className="flex w-[51px] shrink-0 flex-col items-start pt-0.5 pl-[3px]">
      <div className="h-[7px] w-[44px] bg-[radial-gradient(#555_1px,transparent_1px)] bg-[size:4px_3px]" />
      <div className="mt-[5px] flex flex-col">
        {tools.map((n) => <IconButton key={n} name={n} cell="h-[42px] w-[42px]" icon="size-[34px]" active={n === 'arrowTool'} />)}
      </div>
      <div className="mt-[93px] mb-1.5 h-0.5 w-[42px] bg-[#999]" />
      {['single', 'quad', 'duo', 'outliner'].map((n) => (
        <IconButton key={n} name={n} cell="h-[42px] w-[42px]" icon="size-[33px]" active={n === 'outliner'} />
      ))}
      <div className="mt-[6px] mb-[6px] h-0.5 w-[42px] bg-[#999]" />
      <IconButton name="search" cell="h-[42px] w-[42px]" icon="size-[27px]" />
      <Icon name="mayaLogo" className="mt-auto mb-[7px] ml-[3px] size-9" />
    </aside>
  );
}

const NODES = [
  { name: 'persp', cam: true },
  { name: 'top', cam: true },
  { name: 'front', cam: true },
  { name: 'side', cam: true },
  { name: 'defaultLightSet' },
  { name: 'defaultObjectSet' },
];

function Outliner() {
  return (
    <section className="flex w-[355px] shrink-0 flex-col border-l-4 border-[#3a3a3a] pb-2.5">
      <div className="flex h-[21px] shrink-0 bg-[#373737] pt-0.5">
        <h2 className="w-[72px] rounded-t-xs bg-[#444] text-center leading-5 text-[#eee]">Outliner</h2>
      </div>
      <MenuItems items={['Display', 'Show', 'Help']} className="mt-[3px] h-5 shrink-0 gap-[19px] pl-2.5 text-[#d2d2d2]" />
      <div className="mt-2 mr-1 flex h-[21px] shrink-0 items-center pl-1.5">
        <Icon name="filter" className="size-[18px]" />
        <div className="ml-2 flex h-full grow items-center bg-[#2b2b2b] pr-1.5">
          <input aria-label="Search outliner" placeholder="Search..." className="min-w-0 grow bg-transparent pl-1 outline-none placeholder:text-[#8c8c8c]" />
          <Caret className="w-[11px] text-[#c6c6c6]" />
        </div>
      </div>
      <div className="mt-0.5 mr-1 ml-0.5 flex min-h-0 grow bg-[#373737]">
        <div className="flex min-w-0 grow flex-col">
          <ul className="grow">
            {NODES.map((n) => (
              <li key={n.name} className="flex h-[23px] items-center">
                <span className="ml-[39px] flex w-6 justify-start">
                  {n.cam ? (
                    <svg viewBox="0 0 18 12" className="ml-0.5 h-3 w-[18px]">
                      <path d="M0 1h11v9H0zM12 5.500 16.500 0v11z" fill={G} />
                    </svg>
                  ) : <Icon name="setIcon" className="size-5" />}
                </span>
                <span className={n.cam ? 'text-[#6c6c6c]' : 'text-[#cfcfcf]'}>{n.name}</span>
              </li>
            ))}
          </ul>
          <div className="flex h-4 shrink-0 items-center gap-1.5 px-1">
            <svg viewBox="0 0 6 10" className="h-[10px] w-1.5"><path d="M6 0v10L0 5z" fill="#b5b5b5" /></svg>
            <div className="h-3 grow rounded-sm bg-[#5d5d5d]" />
            <svg viewBox="0 0 6 10" className="h-[10px] w-1.5"><path d="M0 0v10l6-5z" fill="#b5b5b5" /></svg>
          </div>
        </div>
        <div className="flex w-[13px] shrink-0 flex-col items-center gap-1 pt-1 pb-[18px]">
          <svg viewBox="0 0 10 6" className="h-1.5 w-[10px]"><path d="M0 6h10L5 0z" fill="#b5b5b5" /></svg>
          <div className="w-full grow rounded-sm bg-[#5d5d5d]" />
          <svg viewBox="0 0 10 6" className="h-1.5 w-[10px]"><path d="M0 0h10L5 6z" fill="#b5b5b5" /></svg>
        </div>
      </div>
    </section>
  );
}

const PANEL_GROUPS = [
  ['aces', 'frameAll', 'dimSquare', 'dimWheel', 'dimStack'],
  ['cam', 'camLock', 'camGear', 'bookmark', 'plane', 'panZoom', 'pencil'],
  ['grid', 'film', 'gateDot', 'gateDim', 'gateMove', 'gateImg', 'gateText'],
  ['cube', 'cubeOn', 'shade', 'cubeTex', 'checker', 'light', 'shadow'],
  ['ao', 'motion', 'aa', 'dof'],
  ['isolate'],
  ['xrayA', 'xrayB', 'xrayC'],
];

function Viewport() {
  return (
    <section className="flex min-w-0 grow flex-col border-t-2 border-l-[5px] border-[#3a3a3a] pb-0.5">
      <div className="flex grow flex-col border-2 border-[#6a6a6a] border-t-[#555]">
        <MenuItems items={['View', 'Shading', 'Lighting', 'Show', 'Renderer', 'Panels']} className="h-[21px] shrink-0 gap-[19px] pl-2.5 text-[#d2d2d2]" />
        <div className="flex h-6 shrink-0 items-center border-b-2 border-[#3c3c3c]">
          {PANEL_GROUPS.map((group, i) => (
            <React.Fragment key={group[0]}>
              <Sep className={i === 0 ? 'w-2.5' : 'w-3'} />
              {group.map((n) => (
                <IconButton
                  key={n}
                  name={n}
                  cell="h-[22px] w-[22px]"
                  icon={n === 'pencil' ? 'size-[22px]' : 'size-[19px]'}
                  active={n === 'grid' || n === 'cubeOn'}
                />
              ))}
            </React.Fragment>
          ))}
          <Sep className="w-3" />
          <IconButton name="exposure" cell="h-[22px] w-[26px]" icon="size-[18px]" />
          <input aria-label="Exposure" defaultValue="0.00" className="h-[17px] w-11 rounded-xs bg-[#2b2b2b] pl-1.5 text-[#ddd] outline-none" />
          <IconButton name="gamma" cell="h-[22px] w-[26px]" icon="size-[17px]" />
          <input aria-label="Gamma" defaultValue="1.00" className="h-[17px] w-11 rounded-xs bg-[#2b2b2b] pl-1.5 text-[#ddd] outline-none" />
          <IconButton name="cms" cell="ml-[3px] h-[22px] w-[21px]" icon="size-[19px]" active />
          <button type="button" className="ml-1 h-[21px] min-w-0 grow bg-[#5d5d5d] pl-0.5 text-left whitespace-nowrap text-[#d0d0d0]">ACES 1.0 SDR-v</button>
        </div>
        <div className="relative grow bg-[#5d5d5d] font-['Liberation_Sans',sans-serif] text-[11px] font-bold text-white">
          <p className="absolute inset-x-0 top-[47px] text-center leading-4">CAPS LOCK ON</p>
          <div className="absolute top-[38px] right-[37px] flex h-14 w-[57px] items-center justify-center bg-linear-to-b from-[#a9a9a9] to-[#929292] text-[#55585c]">FRONT</div>
          <div className="absolute inset-x-[360px] top-[425px] h-px bg-[#484848]" />
          <div className="absolute inset-x-[386px] top-[424px] h-px bg-[#3e3e3e]" />
          <svg viewBox="0 0 30 40" className="absolute bottom-4 left-[22px] h-10 w-[30px] overflow-visible" aria-label="axis">
            <text x="4" y="5" fontSize="12" fill="#1fd11f">y</text>
            <path d="M7.500 10v20" stroke="#1fd11f" strokeWidth="2" />
            <path d="M5 21h4v6H5z" fill="#2222c8" opacity="0.700" />
            <path d="M8 29.500h14" stroke="#c81818" strokeWidth="1.500" />
            <text x="22" y="27" fontSize="10" fill="#e01010">x</text>
          </svg>
          <p className="absolute inset-x-0 bottom-1.5 pr-5 text-center leading-4">persp -Z</p>
        </div>
      </div>
    </section>
  );
}

function Section({ title, actions }) {
  return (
    <section>
      <h3>
        <button type="button" className="flex h-[23px] w-full items-center bg-[#5d5d5d] pl-2 text-[#ccc]">
          <Caret className="mb-1 w-[13px] text-white" />
          <span className="ml-[11px]">{title}</span>
        </button>
      </h3>
      <div className="mt-2 mb-2 flex flex-col gap-1.5 pr-[35px] pl-[34px]">
        {actions.map((a) => (
          <button type="button" key={a} className="h-[26px] bg-[#5d5d5d] font-medium text-[#eee]">{a}</button>
        ))}
      </div>
    </section>
  );
}

const SIDE_TABS = [
  { name: 'Channel Box / Layer Editor', h: 'h-[181px]' },
  { name: 'Attribute Editor', h: 'h-[121px]' },
  { name: 'Modeling Toolkit', h: 'h-[127px]' },
  { name: 'Human IK', h: 'h-[81px]' },
];

function HumanIK() {
  return (
    <aside className="flex w-[350px] shrink-0 border-l-[6px] border-[#3a3a3a]">
      <div className="min-w-0 grow pt-[9px] pr-2.5 pl-2.5">
        <div className="mb-[11px] flex">
          <button type="button" aria-label="Character menu" className="-ml-0.5">
            <svg viewBox="0 0 44 44" className="size-11">
              <defs>
                <linearGradient id="hik" x1="0.500" y1="0" x2="0.700" y2="1">
                  <stop offset="0" stopColor="#0a9be8" />
                  <stop offset="1" stopColor="#04182a" />
                </linearGradient>
              </defs>
              <path d="M0 0h44v44H0z" fill="url(#hik)" />
              <path d="M20 0q8 8 7 18T15 36 1 40" fill="none" stroke="#dfe8ee" strokeWidth="2.500" />
              <circle cx="4" cy="6" r="2.500" fill="#fff" />
              <path d="M0 9 8 8l12-4 1 2-12 6 1 11 4 12-3 1L5 24 2 32H0z" fill="#fff" />
              <path d="M32 19h9l-4.500 4z" fill="#fff" />
            </svg>
          </button>
          <div className="ml-auto grid grid-cols-[auto_175px] items-center gap-x-1.5 gap-y-[3px] pr-px text-right">
            <label htmlFor="character" className="text-[#d0d0d0]">Character:</label>
            <Dropdown id="character" value="None" className="h-[22px]" />
            <label htmlFor="source" className="text-[#858585]">Source:</label>
            <Dropdown id="source" value="None" disabled className="h-[22px]" />
          </div>
        </div>
        <Section title="Create" actions={['Create Skeleton', 'Create Control Rig', 'Create Character Definition', 'Create Custom Rig Mapping', 'Quick Rig Tool']} />
        <Section title="Import Samples" actions={['Import Human IK Example', 'Import Animation Example']} />
      </div>
      <div className="flex w-4 shrink-0 flex-col bg-[#383838] pt-0.5">
        {SIDE_TABS.map(({ name, h }) => (
          <button
            type="button"
            key={name}
            className={`border-b-2 border-[#2f2f2f] pt-3 text-left leading-4 whitespace-nowrap [writing-mode:vertical-rl] ${h} ${name === 'Human IK' ? 'bg-[#444] font-semibold text-white' : 'text-[#8f8f8f]'}`}
          >
            {name}
          </button>
        ))}
      </div>
    </aside>
  );
}

const FIELD = 'shrink-0 rounded-xs bg-[#2b2b2b] text-[#d8d8d8] outline-none';

function TimeSlider() {
  const ticks = Array.from({ length: 26 }, (_, i) => i * 1000);
  return (
    <div className="flex h-[49px] shrink-0 items-center border-t-2 border-[#383838] pr-[7px] pl-0.5">
      <Grip className="h-9" />
      <div className="relative ml-1.5 flex h-9 min-w-0 grow bg-[#2b2b2b] pl-1.5 text-[#777]">
        {ticks.map((t) => (
          <div key={t} className={`flex flex-col justify-between ${t === 25000 ? 'w-[7px]' : 'flex-1 basis-0'}`}>
            <span className="leading-3">{t === 25000 ? '2' : t}</span>
            <span className="h-[22px] w-0.5 bg-[#8a8a8a]" />
          </div>
        ))}
        <span className="absolute bottom-0 left-1.5 leading-4 text-[#eee]">2</span>
      </div>
      <input aria-label="Current frame" defaultValue="2" className={`ml-2 h-[21px] w-[101px] pl-1.5 ${FIELD}`} />
      <div className="mb-1 ml-2 flex">
        {['toStart', 'stepBack', 'keyBack', 'playBack', 'play', 'keyFwd', 'stepFwd', 'toEnd'].map((n) => (
          <IconButton key={n} name={n} cell="h-[27px] w-[27px]" icon="size-5" />
        ))}
      </div>
    </div>
  );
}

function RangeSlider() {
  return (
    <div className="flex h-[42px] shrink-0 items-center border-t-2 border-[#383838] pr-[7px] pl-0.5">
      <Grip className="h-8" />
      <input aria-label="Animation start" defaultValue="2" className={`ml-1.5 h-7 w-[102px] pl-1.5 ${FIELD}`} />
      <input aria-label="Playback start" defaultValue="2" className={`ml-2 h-7 w-[102px] pl-1.5 ${FIELD}`} />
      <div className="ml-2 flex h-7 min-w-0 grow items-center bg-[#383838] px-[5px]">
        <div className="flex h-[23px] grow items-center rounded-sm bg-[#5d5d5d] px-1 text-[#b8b8b8]">
          <button type="button" aria-label="Range start" className="size-4 rounded-xs bg-[#929292]" />
          <span className="ml-1 grow">2</span>
          <span className="mr-1">25000</span>
          <button type="button" aria-label="Range end" className="size-4 rounded-xs bg-[#929292]" />
        </div>
      </div>
      <input aria-label="Playback end" defaultValue="25000" className={`ml-2 h-7 w-[102px] pl-1.5 ${FIELD}`} />
      <input aria-label="Animation end" defaultValue="25000" className={`ml-2 h-7 w-[102px] pl-1.5 ${FIELD}`} />
      <Sep className="w-3" />
      <IconButton name="bookAdd" cell="w-[39px]" />
      <Sep className="w-3" />
      <button type="button" aria-label="Character set menu" className="flex w-8 justify-center"><Caret className="w-2 text-[#777]" /></button>
      <button type="button" className="h-7 w-[116px] rounded-xs border border-[#4d4d4d] bg-[#404040] px-1 text-left whitespace-nowrap text-[#e0e0e0]">No Character Set</button>
      <button type="button" aria-label="Anim layer menu" className="flex w-8 justify-center"><Caret className="w-2 text-[#777]" /></button>
      <button type="button" className="h-7 w-[116px] rounded-xs border border-[#4d4d4d] bg-[#404040] px-1 text-left whitespace-nowrap text-[#e0e0e0]">No Anim Layer</button>
      <Sep />
      <Dropdown label="Frame rate" value="24 fps" className="h-[23px] w-[110px]" />
      <IconButton name="loop" cell="ml-2 w-[34px]" />
      <IconButton name="cached" cell="w-8" />
      <Sep className="w-5" />
      {['speaker', 'autoKey', 'runner'].map((n) => <IconButton key={n} name={n} cell="w-8" />)}
    </div>
  );
}

function CommandLine() {
  return (
    <div className="flex h-[39px] shrink-0 items-center border-t-2 border-[#383838] pr-2 pl-0.5">
      <Grip className="h-8" />
      <button type="button" aria-label="Help" className="ml-1.5"><Icon name="help" className="size-[19px]" /></button>
      <svg viewBox="0 0 16 16" className="mr-1 ml-auto size-4 self-end" aria-hidden="true">
        <path d="M0 0l16 16M0 5l11 11M0 10l6 6" stroke="#2b2b2b" strokeWidth="1.300" />
      </svg>
      <div className="h-full w-0.5 bg-[#3a3a3a]" />
      <Grip className="ml-1 h-8" />
      <label htmlFor="mel" className="ml-4 w-[41px] text-[#ddd]">MEL</label>
      <input id="mel" className={`h-6 w-[389px] pl-1.5 ${FIELD}`} />
      <span className="mx-[3px] h-3 w-[3px] bg-[radial-gradient(#777_1px,transparent_1px)] bg-[size:3px_4px]" />
      <input aria-label="Command result" readOnly className={`h-6 w-[569px] pl-1.5 ${FIELD}`} />
      <button type="button" aria-label="Script editor" className="ml-1.5"><Icon name="script" className="size-[22px]" /></button>
    </div>
  );
}

export default function App() {
  return (
    <div className="flex h-screen flex-col bg-linear-to-b from-[#7fa3b0] to-[#2c6070] pt-px pr-[3px] pb-px pl-0.5">
      <div className="flex min-h-0 grow flex-col overflow-hidden rounded-lg bg-[#444] font-['Noto_Sans','Open_Sans',sans-serif] text-xs text-[#d2d2d2]">
        <TitleBar />
        <MenuBar />
        <StatusLine />
        <Shelf />
        <main className="flex min-h-0 grow">
          <ToolBox />
          <Outliner />
          <Viewport />
          <HumanIK />
        </main>
        <TimeSlider />
        <RangeSlider />
        <CommandLine />
      </div>
    </div>
  );
}
